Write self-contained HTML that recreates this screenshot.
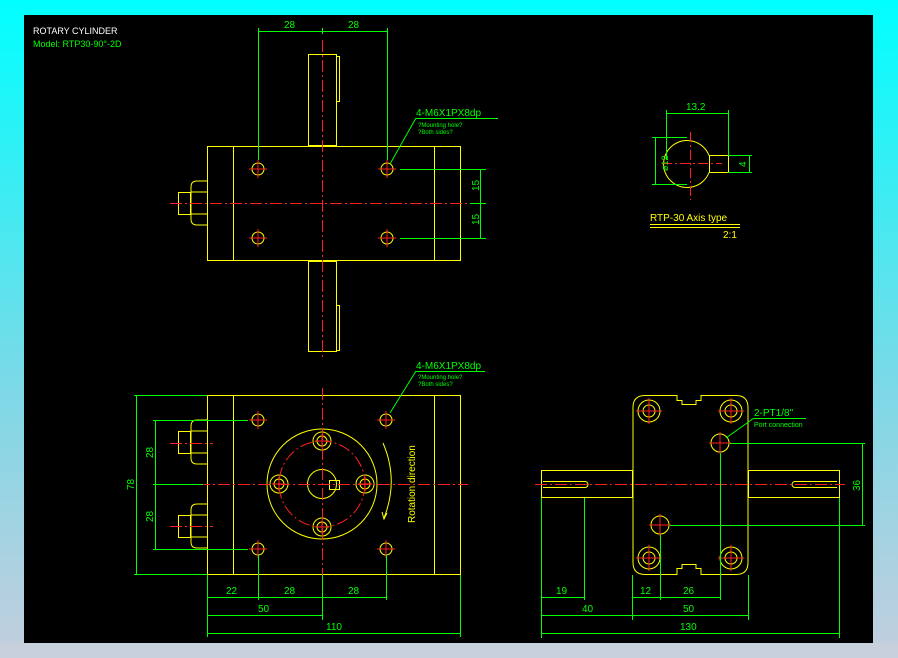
<!DOCTYPE html><html><head><style>
html,body{margin:0;padding:0;width:898px;height:658px;overflow:hidden;background:linear-gradient(#00ffff,#7fd8e6 60%,#c4cede);}
svg{position:absolute;left:0;top:0}
text{font-family:"Liberation Sans",sans-serif;}
</style></head><body>
<svg width="898" height="658" viewBox="0 0 898 658">
<rect x="0" y="643" width="898" height="15" fill="#c8d0dc"/>
<rect x="24" y="15" width="849" height="628" fill="#000"/>
<g fill="none" stroke-width="1">
<!-- TOP VIEW -->
<g stroke="#ffff00">
<rect x="207.5" y="146.5" width="253" height="114"/>
<line x1="233.5" y1="146" x2="233.5" y2="261"/><line x1="434.5" y1="146" x2="434.5" y2="261"/>
<rect x="308.5" y="54.5" width="28" height="91"/><path d="M336.5 56.5h3v45h-3"/>
<rect x="308.5" y="261.5" width="28" height="90"/><path d="M336.5 305.5h3v45h-3"/>
<path d="M207 181h-10q-6 0-6 6v32q0 6 6 6h10M191 192h16M191 214h16"/>
<rect x="178.5" y="192.5" width="12" height="22"/>
<circle cx="258" cy="169" r="6"/><circle cx="387" cy="169" r="6"/><circle cx="258" cy="238" r="6"/><circle cx="387" cy="238" r="6"/>
</g>
<g stroke="#ff2020" stroke-dasharray="12 3 2 3">
<line x1="322.5" y1="40" x2="322.5" y2="358"/><line x1="170" y1="203.5" x2="468" y2="203.5"/>
</g>
<g stroke="#ff2020">
<path d="M249 169h18M258 160v18M378 169h18M387 160v18M249 238h18M258 229v18M378 238h18M387 229v18"/>
</g>
<g stroke="#00ff00">
<path d="M258.5 28v132M387.5 28v132M258 31.5h129M322.5 28v6"/>
<path d="M400 169.5h86M400 238.5h86M470 203.5h16M480.5 169v69"/>
<path d="M416 118.5h82M416 118l-26 46"/>
</g>
<!-- FRONT VIEW -->
<g stroke="#ffff00">
<rect x="207.5" y="395.5" width="253" height="179"/>
<line x1="233.5" y1="395" x2="233.5" y2="575"/><line x1="434.5" y1="395" x2="434.5" y2="575"/>
<circle cx="322" cy="484" r="55"/><circle cx="322" cy="484" r="14.5"/>
<rect x="329.5" y="480.5" width="10" height="9"/>
<circle cx="322" cy="441" r="9"/><circle cx="322" cy="441" r="5"/>
<circle cx="279" cy="484" r="9"/><circle cx="279" cy="484" r="5"/>
<circle cx="365" cy="484" r="9"/><circle cx="365" cy="484" r="5"/>
<circle cx="322" cy="527" r="9"/><circle cx="322" cy="527" r="5"/>
<circle cx="258" cy="420" r="6"/><circle cx="386" cy="420" r="6"/><circle cx="258" cy="549" r="6"/><circle cx="386" cy="549" r="6"/>
<path d="M207 420h-10q-6 0-6 6v32q0 6 6 6h10M191 431h16M191 453h16"/><rect x="178.5" y="431.5" width="12" height="22"/>
<path d="M207 504h-10q-6 0-6 6v32q0 6 6 6h10M191 515h16M191 537h16"/><rect x="178.5" y="515.5" width="12" height="22"/>
<path d="M383 443q16 37 1 75"/><path d="M382 512l2 7 3-6"/>
</g>
<g stroke="#ff2020" stroke-dasharray="12 3 2 3">
<line x1="322.5" y1="388" x2="322.5" y2="582"/><line x1="198" y1="484.5" x2="468" y2="484.5"/>
<circle cx="322" cy="484" r="43"/>
<line x1="170" y1="443.5" x2="213" y2="443.5"/><line x1="170" y1="526.5" x2="213" y2="526.5"/>
</g>
<g stroke="#ff2020">
<path d="M249 420h18M258 411v18M377 420h18M386 411v18M249 549h18M258 540v18M377 549h18M386 540v18"/>
<path d="M315 441h14M322 434v14M272 484h14M279 477v14M358 484h14M365 477v14M315 527h14M322 520v14"/>
</g>
<g stroke="#00ff00">
<path d="M134 395.5h73M134 574.5h73M136.5 395v179"/>
<path d="M153 420.5h95M153 549.5h95M153 484.5h50M155.5 420v129"/>
<path d="M207.5 575v62M258.5 555v45M322.5 575v45M386.5 555v45M460.5 575v62"/>
<path d="M207 597.5h179M207 615.5h115M207 633.5h253"/>
<path d="M416 371.5h69M416 371l-26 42"/>
</g>
<!-- AXIS DETAIL -->
<g stroke="#ffff00">
<path d="M709 172.5A23.5 23.5 0 1 1 709 155.5"/>
<rect x="709.5" y="155.5" width="19" height="17"/>
</g>
<g stroke="#ff2020" stroke-dasharray="10 3 2 3"><path d="M662 163.5h60M690.5 132v68"/></g>
<g stroke="#00ff00">
<path d="M666.5 110v50M728.5 110v45M666 113.5h63"/>
<path d="M652 137.5h35M652 184.5h35M655.5 137v48"/>
<path d="M728 155.5h24M728 172.5h24M749.5 155v18"/>
</g>
<g stroke="#ffff00"><path d="M650 224.5h90M650 227.5h90"/></g>
<!-- RIGHT VIEW -->
<g stroke="#ffff00">
<path d="M645 395.5h32v5h5v4h14v-4h5v-5h35q12 0 12 12v155q0 12-12 12h-35v-6h-5v-4h-14v4h-5v6h-32q-12 0-12-12v-155q0-12 12-12z"/>
<circle cx="649" cy="411" r="11"/><circle cx="649" cy="411" r="6"/>
<circle cx="731" cy="411" r="11"/><circle cx="731" cy="411" r="6"/>
<circle cx="649" cy="558" r="11"/><circle cx="649" cy="558" r="6"/>
<circle cx="731" cy="558" r="11"/><circle cx="731" cy="558" r="6"/>
<circle cx="720" cy="443" r="9"/><circle cx="660" cy="525" r="9"/>
<rect x="541.5" y="470.5" width="91" height="27"/><rect x="748.5" y="470.5" width="91" height="27"/>
<path d="M543 481.5h42a3 3 0 0 1 0 6h-42M837 481.5h-42a3 3 0 0 0 0 6h42"/>
</g>
<g stroke="#ff2020" stroke-dasharray="12 3 2 3"><line x1="535" y1="484.5" x2="845" y2="484.5"/></g>
<g stroke="#ff2020">
<path d="M636 411h26M649 398v26M718 411h26M731 398v26M636 558h26M649 545v26M718 558h26M731 545v26M709 443h22M720 432v22M649 525h22M660 514v22"/>
</g>
<g stroke="#00ff00">
<path d="M730 443.5h135M670 525.5h195M862.5 443v82"/>
<path d="M541.5 498v140M584.5 498v102M632.5 575v45M660.5 535v65M720.5 453v147M748.5 575v45M839.5 498v140"/>
<path d="M541 597.5h43M632 597.5h88M541 615.5h207M541 633.5h298"/>
<path d="M754 418.5h52M754 418l-28 20"/>
</g>
</g>
<g font-size="10" fill="#00ff00">
<text x="33" y="34" fill="#fff" font-size="9">ROTARY CYLINDER</text>
<text x="33" y="47" font-size="9">Model: RTP30-90°-2D</text>
<text x="284" y="28">28</text><text x="348" y="28">28</text>
<text x="416" y="116">4-M6X1PX8dp</text>
<text x="418" y="127" font-size="6">?Mounting hole?</text><text x="418" y="134" font-size="6">?Both sides?</text>
<text transform="translate(479 191) rotate(-90)">15</text><text transform="translate(479 225) rotate(-90)">15</text>
<text x="416" y="369">4-M6X1PX8dp</text>
<text x="418" y="379" font-size="6">?Mounting hole?</text><text x="418" y="386" font-size="6">?Both sides?</text>
<text transform="translate(134 490) rotate(-90)">78</text>
<text transform="translate(153 458) rotate(-90)">28</text><text transform="translate(153 522) rotate(-90)">28</text>
<text x="226" y="594">22</text><text x="284" y="594">28</text><text x="348" y="594">28</text>
<text x="258" y="612">50</text><text x="326" y="630">110</text>
<text transform="translate(415 523) rotate(-90)" fill="#ffff00">Rotation direction</text>
<text x="686" y="110">13.2</text>
<text transform="translate(668 171) rotate(-90)" font-size="9">ø12</text>
<text transform="translate(746 167) rotate(-90)">4</text>
<text x="650" y="221" fill="#ffff00">RTP-30 Axis type</text>
<text x="723" y="238" fill="#ffff00">2:1</text>
<text x="754" y="416">2-PT1/8"</text>
<text x="754" y="427" font-size="7">Port connection</text>
<text transform="translate(860 491) rotate(-90)">36</text>
<text x="556" y="594">19</text><text x="640" y="594">12</text><text x="683" y="594">26</text>
<text x="582" y="612">40</text><text x="683" y="612">50</text><text x="680" y="630">130</text>
</g>
</svg>
</body></html>
